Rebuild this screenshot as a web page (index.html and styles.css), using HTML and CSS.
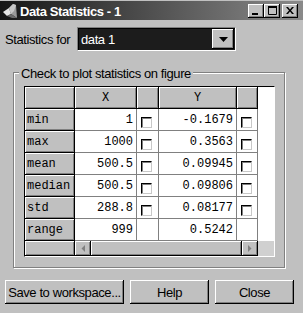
FILE: index.html
```html
<!DOCTYPE html>
<html lang="en">
<head>
  <meta charset="UTF-8" />
  <title>Data Statistics - 1</title>
  <link rel="stylesheet" href="styles.css">
</head>
<body>

  <div class="window">
    <div class="titlebar">
      <svg class="app-icon" width="16" height="16" viewBox="0 0 16 16">
        <polygon points="1,9 7,5 9,11 5,13" fill="#e8e8e8" />
        <polygon points="7,5 11,1 14,2 15,15 9,11" fill="#9a9a9a" />
        <polygon points="11,1 14,2 12,8 9,11 7,5" fill="#c8c8c8" />
        <polygon points="5,13 9,11 15,15 10,15" fill="#6a6a6a" />
      </svg>
      <span class="title">Data Statistics - 1</span>
      <div class="caption-btns">
        <span class="cap-btn">
          <svg width="8" height="8" viewBox="0 0 8 8"><rect x="0" y="6" width="6" height="2" fill="#000" /></svg>
        </span>
        <span class="cap-btn">
          <svg width="9" height="9" viewBox="0 0 9 9"><path d="M0.5 1.5h8v7h-8z" fill="none" stroke="#000" /><rect x="0" y="0" width="9" height="2" fill="#000" /></svg>
        </span>
        <span class="cap-btn close">
          <svg width="8" height="7" viewBox="0 0 8 7"><path d="M0 0h2l2 2.5 2-2.5h2l-3 3.5 3 3.5h-2l-2-2.5-2 2.5h-2l3-3.5z" fill="#000" /></svg>
        </span>
      </div>
    </div>

    <div class="content">
      <div class="picker">
        <span class="picker-label">Statistics for</span>
        <div class="combo">
          <span class="combo-text">data 1</span>
          <span class="combo-btn">
            <svg width="9" height="5" viewBox="0 0 9 5"><polygon points="0,0 9,0 4.5,5" fill="#000" /></svg>
          </span>
        </div>
      </div>

      <fieldset class="group">
        <legend>Check to plot statistics on figure</legend>
        <div class="table">
          <div class="hd"></div><div class="hd">X</div><div class="hd"></div><div class="hd">Y</div><div class="hd"></div><div class="fill"></div>

          <div class="rh">min</div><div class="cell">1</div><div class="cb-cell"><span class="check"></span></div><div class="cell">-0.1679</div><div class="cb-cell"><span class="check"></span></div><div class="fill"></div>
          <div class="rh">max</div><div class="cell">1000</div><div class="cb-cell"><span class="check"></span></div><div class="cell">0.3563</div><div class="cb-cell"><span class="check"></span></div><div class="fill"></div>
          <div class="rh">mean</div><div class="cell">500.5</div><div class="cb-cell"><span class="check"></span></div><div class="cell">0.09945</div><div class="cb-cell"><span class="check"></span></div><div class="fill"></div>
          <div class="rh">median</div><div class="cell">500.5</div><div class="cb-cell"><span class="check"></span></div><div class="cell">0.09806</div><div class="cb-cell"><span class="check"></span></div><div class="fill"></div>
          <div class="rh">std</div><div class="cell">288.8</div><div class="cb-cell"><span class="check"></span></div><div class="cell">0.08177</div><div class="cb-cell"><span class="check"></span></div><div class="fill"></div>
          <div class="rh">range</div><div class="cell">999</div><div class="cb-cell"></div><div class="cell">0.5242</div><div class="cb-cell"></div><div class="fill"></div>

          <div class="rh"></div>
          <div class="scrollbar">
            <span class="sb-btn">
              <svg width="4" height="7" viewBox="0 0 4 7"><polygon points="4,0 4,7 0.5,3.5" fill="#808080" /></svg>
            </span>
            <span class="sb-thumb"></span>
            <span class="sb-btn">
              <svg width="4" height="7" viewBox="0 0 4 7"><polygon points="0,0 0,7 3.5,3.5" fill="#808080" /></svg>
            </span>
          </div>
          <div class="fill scroll-fill"></div>
        </div>
      </fieldset>

      <div class="actions">
        <button class="btn btn-wide">Save to workspace...</button>
        <button class="btn">Help</button>
        <button class="btn">Close</button>
      </div>
    </div>
  </div>

</body>
</html>
```

FILE: styles.css
```css
body {
  margin: 0;
  font-family: 'Liberation Sans', Arial, sans-serif;
  font-size: 13px;
  color: #000;
}

.window {
  width: 303px;
  height: 313px;
  box-sizing: border-box;
  padding-top: 1px;
  background: #c0c0c0;
}

/* title bar */
.titlebar {
  height: 19px;
  display: flex;
  align-items: center;
  padding: 0 5px 0 2px;
  background: linear-gradient(90deg, #161616, #8a8a8a);
  color: #fff;
}

.app-icon {
  flex: none;
  margin-right: 2px;
}

.title {
  flex: 1;
  font-weight: bold;
  letter-spacing: -0.4px;
  padding-top: 2px;
}

.caption-btns {
  display: flex;
}

.cap-btn {
  width: 16px;
  height: 14px;
  box-sizing: border-box;
  display: flex;
  align-items: center;
  justify-content: center;
  background: #c0c0c0;
  box-shadow: inset -1px -1px #000, inset 1px 1px #fff, inset -2px -2px #808080;
}

.cap-btn.close {
  margin-left: 2px;
}

/* content */
.content {
  padding: 7px 5px 0 5px;
}

.picker {
  display: flex;
  align-items: center;
  height: 24px;
}

.picker-label {
  width: 72px;
  letter-spacing: -0.4px;
}

.combo {
  width: 159px;
  height: 24px;
  box-sizing: border-box;
  display: flex;
  align-items: center;
  padding: 1px 1px 1px 3px;
  background: #1c1c1c;
  border: 1px solid;
  border-color: #808080 #fff #fff #808080;
  box-shadow: inset 1px 1px #000;
}

.combo-text {
  flex: 1;
  color: #fff;
  letter-spacing: -0.4px;
}

.combo-btn {
  width: 22px;
  height: 20px;
  display: flex;
  align-items: center;
  justify-content: center;
  background: #c0c0c0;
  box-shadow: inset -1px -1px #000, inset 1px 1px #fff, inset -2px -2px #808080;
}

/* group box */
.group {
  margin: 12px 0 0 8px;
  width: 272px;
  box-sizing: border-box;
  min-inline-size: 0;
  padding: 5px 9px 10px 10px;
  border: 1px solid #808080;
  box-shadow: inset 1px 1px #fff, 1px 1px #fff;
}

.group legend {
  margin-left: -5px;
  padding: 3px 2px 0;
  line-height: 15px;
  letter-spacing: -0.4px;
  background: #c0c0c0;
}

.table {
  display: grid;
  grid-template-columns: 50px 62px 22px 78px 21px 16px;
  grid-template-rows: repeat(7, 22px) 15px;
  border: 1px solid;
  border-color: #000 #fff #fff #000;
  background: #fff;
  font-family: 'Liberation Mono', 'Courier New', monospace;
  font-size: 12px;
}

.hd, .rh {
  box-sizing: border-box;
  display: flex;
  align-items: center;
  background: #c0c0c0;
  border-right: 1px solid #000;
  border-bottom: 1px solid #000;
  box-shadow: inset 1px 1px #fff, inset -1px -1px #808080;
}

.hd {
  justify-content: center;
}

.rh {
  padding-left: 2px;
}

.cell {
  box-sizing: border-box;
  display: flex;
  align-items: center;
  justify-content: flex-end;
  padding-right: 3px;
  border-right: 1px solid #808080;
  border-bottom: 1px solid #808080;
}

.cb-cell {
  box-sizing: border-box;
  display: flex;
  align-items: flex-end;
  padding: 0 0 2px 4px;
  border-right: 1px solid #808080;
  border-bottom: 1px solid #808080;
}

.check {
  width: 11px;
  height: 11px;
  box-sizing: border-box;
  background: #fff;
  border: 1px solid;
  border-color: #000 #c8c8c8 #c8c8c8 #000;
  box-shadow: inset 1px 1px #808080;
}

.scrollbar {
  grid-column: 2 / 6;
  display: flex;
  background: #c0c0c0;
}

.sb-btn, .sb-thumb {
  box-sizing: border-box;
  background: #c0c0c0;
  box-shadow: inset -1px -1px #000, inset 1px 1px #fff, inset -2px -2px #808080;
}

.sb-btn {
  width: 16px;
  display: flex;
  align-items: center;
  justify-content: center;
}

.sb-thumb {
  flex: 1;
}

.scroll-fill {
  background: #d0d0d0;
}

/* buttons */
.actions {
  display: flex;
  gap: 6px;
  margin-top: 12px;
}

.btn {
  width: 79px;
  height: 24px;
  padding: 0;
  border: none;
  font-family: 'Liberation Sans', Arial, sans-serif;
  font-size: 13px;
  letter-spacing: -0.4px;
  color: #000;
  background: #c0c0c0;
  box-shadow: inset -1px -1px #000, inset 1px 1px #fff, inset -2px -2px #808080;
}

.btn-wide {
  width: 119px;
}
```
